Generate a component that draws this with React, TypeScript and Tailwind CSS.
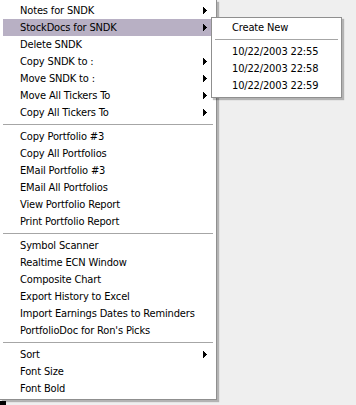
import React from "react";

type Item = { label: string; arrow?: boolean; active?: boolean } | "sep";

const items: Item[] = [
  { label: "Notes for SNDK", arrow: true },
  { label: "StockDocs for SNDK", arrow: true, active: true },
  { label: "Delete SNDK" },
  { label: "Copy SNDK to :", arrow: true },
  { label: "Move SNDK to :", arrow: true },
  { label: "Move All Tickers To", arrow: true },
  { label: "Copy All Tickers To", arrow: true },
  "sep",
  { label: "Copy Portfolio #3" },
  { label: "Copy All Portfolios" },
  { label: "EMail Portfolio #3" },
  { label: "EMail All Portfolios" },
  { label: "View Portfolio Report" },
  { label: "Print Portfolio Report" },
  "sep",
  { label: "Symbol Scanner" },
  { label: "Realtime ECN Window" },
  { label: "Composite Chart" },
  { label: "Export History to Excel" },
  { label: "Import Earnings Dates to Reminders" },
  { label: "PortfolioDoc for Ron's Picks" },
  "sep",
  { label: "Sort", arrow: true },
  { label: "Font Size" },
  { label: "Font Bold" },
];

const sub: Item[] = [
  { label: "Create New" },
  "sep",
  { label: "10/22/2003 22:55" },
  { label: "10/22/2003 22:58" },
  { label: "10/22/2003 22:59" },
];

function Arrow() {
  return (
    <svg width="4" height="7" viewBox="0 0 4 7" className="block">
      <path d="M0 0 L4 3.5 L0 7 Z" fill="#000" shapeRendering="crispEdges" />
    </svg>
  );
}

function Row({ it }: { it: Item }) {
  if (it === "sep") {
    return (
      <div className="h-[7px] flex items-center">
        <div className="h-px w-full bg-[#a6a6a6]" />
      </div>
    );
  }
  return (
    <div
      className={`h-[17px] flex items-center pl-[17px] pr-[6px] ${
        it.active ? "bg-[#b8b0c4]" : ""
      }`}
    >
      <span className="flex-1 whitespace-nowrap leading-none tracking-[-0.15px]">{it.label}</span>
      {it.arrow && <Arrow />}
    </div>
  );
}

export default function App() {
  return (
    <div
      className="relative w-[356px] h-[405px] bg-[#efefef] overflow-hidden text-[11px] text-black"
      style={{ fontFamily: "'DejaVu Sans Condensed', 'Liberation Sans', Arial, sans-serif" }}
    >
      <div className="absolute left-0 top-0 w-[217px] h-[400px] bg-white border-r border-b border-[#8f8f8f] shadow-[2px_2px_1px_rgba(0,0,0,0.25)] pt-[2px] pl-[3px] pr-[3px]">
        {items.map((it, i) => (
          <Row key={i} it={it} />
        ))}
      </div>
      <div className="absolute left-0 top-[401px] w-[6px] h-[4px] bg-black" />
      <div className="absolute left-[211px] top-[17px] w-[131px] h-[81px] bg-white border border-[#8f8f8f] shadow-[2px_2px_1px_rgba(0,0,0,0.25)] pt-[1px] pl-[3px] pr-[3px]">
        {sub.map((it, i) => (
          <Row key={i} it={it} />
        ))}
      </div>
    </div>
  );
}
